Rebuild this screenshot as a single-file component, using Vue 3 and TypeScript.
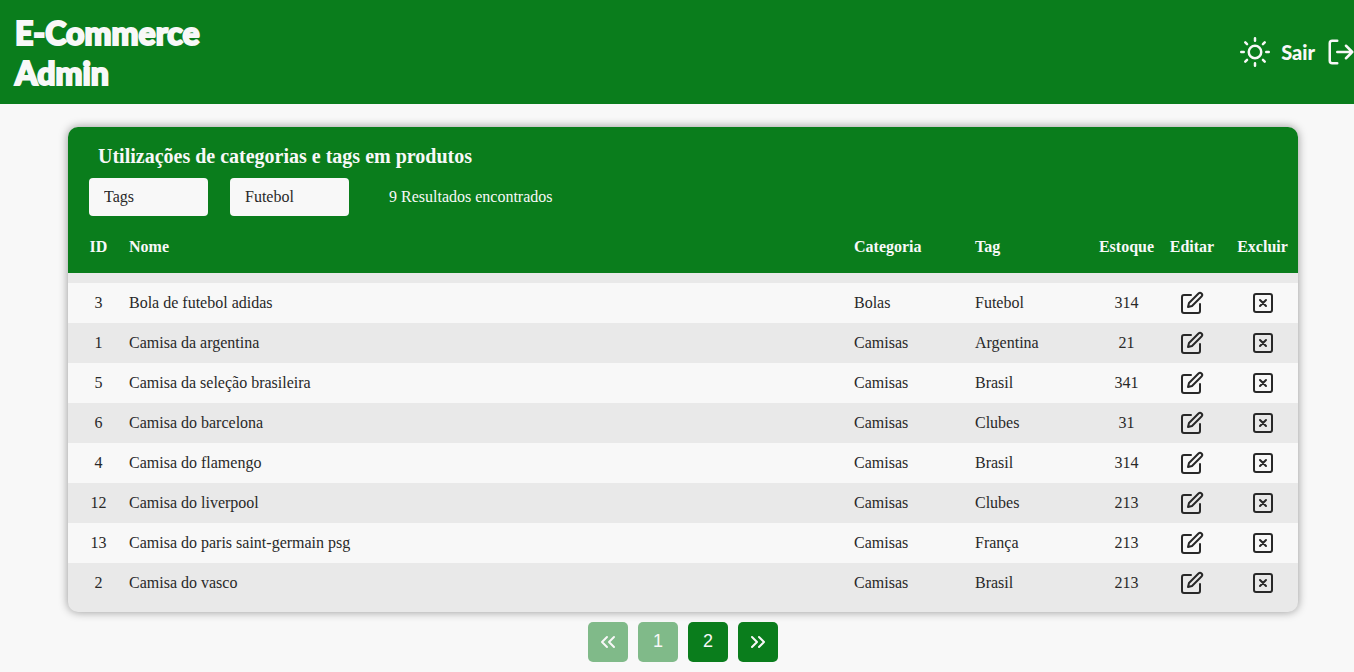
<script setup lang="ts">
import { ref } from 'vue'

interface Product {
  id: number
  name: string
  category: string
  tag: string
  stock: number
}

const products: Product[] = [
  { id: 3, name: 'Bola de futebol adidas', category: 'Bolas', tag: 'Futebol', stock: 314 },
  { id: 1, name: 'Camisa da argentina', category: 'Camisas', tag: 'Argentina', stock: 21 },
  { id: 5, name: 'Camisa da seleção brasileira', category: 'Camisas', tag: 'Brasil', stock: 341 },
  { id: 6, name: 'Camisa do barcelona', category: 'Camisas', tag: 'Clubes', stock: 31 },
  { id: 4, name: 'Camisa do flamengo', category: 'Camisas', tag: 'Brasil', stock: 314 },
  { id: 12, name: 'Camisa do liverpool', category: 'Camisas', tag: 'Clubes', stock: 213 },
  { id: 13, name: 'Camisa do paris saint-germain psg', category: 'Camisas', tag: 'França', stock: 213 },
  { id: 2, name: 'Camisa do vasco', category: 'Camisas', tag: 'Brasil', stock: 213 },
]

const kind = ref('Tags')
const value = ref('Futebol')
const total = 9
</script>

<template>
  <header class="topbar">
    <h1 class="brand">E-Commerce Admin</h1>
    <div class="actions">
      <button type="button" class="plain" aria-label="Alternar tema">
        <svg class="icon-lg" viewBox="0 0 24 24">
          <circle cx="12" cy="12" r="5" />
          <path d="M12 1v2M12 21v2M4.22 4.22l1.42 1.42M18.36 18.36l1.42 1.42M1 12h2M21 12h2M4.22 19.78l1.42-1.42M18.36 5.64l1.42-1.42" />
        </svg>
      </button>
      <button type="button" class="plain logout">
        <span>Sair</span>
        <svg class="icon-lg" viewBox="0 0 24 24">
          <path d="M9 21H5a2 2 0 0 1-2-2V5a2 2 0 0 1 2-2h4M16 17l5-5-5-5M21 12H9" />
        </svg>
      </button>
    </div>
  </header>

  <main class="page">
    <section class="card">
      <div class="card-head">
        <h2 class="title">Utilizações de categorias e tags em produtos</h2>
        <div class="filters">
          <select v-model="kind" class="filter" aria-label="Tipo de filtro">
            <option>Tags</option>
            <option>Categorias</option>
          </select>
          <select v-model="value" class="filter" aria-label="Valor do filtro">
            <option>Futebol</option>
            <option>Brasil</option>
            <option>Clubes</option>
          </select>
          <span class="count">{{ total }} Resultados encontrados</span>
        </div>
      </div>

      <table class="products">
        <colgroup>
          <col class="col-number" />
          <col />
          <col class="col-group" />
          <col class="col-group" />
          <col class="col-number" />
          <col class="col-edit" />
          <col class="col-delete" />
        </colgroup>
        <thead>
          <tr>
            <th class="center">ID</th>
            <th>Nome</th>
            <th>Categoria</th>
            <th>Tag</th>
            <th class="center">Estoque</th>
            <th class="center">Editar</th>
            <th class="center">Excluir</th>
          </tr>
        </thead>
        <tbody>
          <tr v-for="p in products" :key="p.id">
            <td class="center">{{ p.id }}</td>
            <td>{{ p.name }}</td>
            <td>{{ p.category }}</td>
            <td>{{ p.tag }}</td>
            <td class="center">{{ p.stock }}</td>
            <td>
              <button type="button" class="plain row-button" :aria-label="`Editar ${p.name}`">
                <svg class="icon" viewBox="0 0 24 24">
                  <path d="M11 4H4a2 2 0 0 0-2 2v14a2 2 0 0 0 2 2h14a2 2 0 0 0 2-2v-7" />
                  <path d="M18.5 2.5a2.121 2.121 0 0 1 3 3L12 15l-4 1 1-4 9.5-9.5z" />
                </svg>
              </button>
            </td>
            <td>
              <button type="button" class="plain row-button" :aria-label="`Excluir ${p.name}`">
                <svg class="icon" viewBox="0 0 24 24">
                  <rect x="3" y="3" width="18" height="18" rx="2" />
                  <path d="M9 9l6 6M15 9l-6 6" />
                </svg>
              </button>
            </td>
          </tr>
        </tbody>
      </table>
    </section>

    <nav class="pager" aria-label="Paginação">
      <button type="button" disabled aria-label="Página anterior">
        <svg class="icon" viewBox="0 0 24 24"><path d="M11 17l-5-5 5-5M18 17l-5-5 5-5" /></svg>
      </button>
      <button type="button" class="page-number" disabled>1</button>
      <button type="button" class="page-number">2</button>
      <button type="button" aria-label="Próxima página">
        <svg class="icon" viewBox="0 0 24 24"><path d="M13 17l5-5-5-5M6 17l5-5-5-5" /></svg>
      </button>
    </nav>
  </main>
</template>

<style>
body {
  margin: 0;
  background: #f8f8f8;
  color: #282828;
  font: 16px/20px "Liberation Serif", serif;
  overflow-x: hidden;
}
</style>

<style scoped>
.topbar {
  display: flex;
  align-items: center;
  justify-content: space-between;
  padding: 13px 0 11px 15px;
  background: #0a7d1c;
  color: #f8f8f8;
  font-family: Lato, sans-serif;
}

.brand {
  width: min-content;
  min-width: 200px;
  margin: 0;
  font-size: 32px;
  font-weight: 900;
  line-height: 40px;
  -webkit-text-stroke: 2px currentColor;
}

.actions {
  display: flex;
  align-items: center;
  gap: 11px;
  margin: -2px -2px 0 0;
}

.plain {
  display: flex;
  align-items: center;
  padding: 0;
  border: 0;
  background: none;
  color: inherit;
  font: inherit;
  cursor: pointer;
}

.logout {
  gap: 11px;
  font-size: 20px;
  font-weight: 900;
}

svg {
  display: block;
  fill: none;
  stroke: currentColor;
  stroke-width: 2;
  stroke-linecap: round;
  stroke-linejoin: round;
}

.icon-lg {
  width: 30px;
  height: 30px;
}

.icon {
  width: 24px;
  height: 24px;
}

.page {
  padding: 23px 56px 10px 68px;
}

.card {
  overflow: hidden;
  padding-bottom: 9px;
  border-radius: 10px;
  background: #e9e9e9;
  box-shadow: 0 0 10px rgba(0, 0, 0, 0.4);
}

.card-head {
  padding: 17px 21px 5px;
  background: #0a7d1c;
  color: #f8f8f8;
}

.title {
  margin: 0 0 10px;
  padding-left: 9px;
  font-size: 20px;
  line-height: 24px;
}

.filters {
  display: flex;
  align-items: center;
  gap: 22px;
}

.filter {
  appearance: none;
  width: 119px;
  height: 38px;
  padding: 0 15px;
  border: 0;
  border-radius: 4px;
  background: #f8f8f8;
  color: #282828;
  font: inherit;
}

.count {
  padding-left: 18px;
}

.products {
  width: 100%;
  table-layout: fixed;
  border-collapse: collapse;
}

.col-number {
  width: 61px;
}

.col-group {
  width: 121px;
}

.col-edit {
  width: 70px;
}

.col-delete {
  width: 71px;
}

th,
td {
  padding: 0;
  text-align: left;
}

th {
  height: 52px;
  background: #0a7d1c;
  color: #f8f8f8;
}

td {
  height: 40px;
}

tbody::before {
  content: "";
  display: block;
  height: 10px;
}

tbody tr:nth-child(odd) {
  background: #f8f8f8;
}

.center {
  text-align: center;
}

.row-button {
  margin: 0 auto;
}

.pager {
  display: flex;
  justify-content: center;
  gap: 10px;
  margin-top: 10px;
}

.pager button {
  display: flex;
  align-items: center;
  justify-content: center;
  width: 40px;
  height: 40px;
  padding: 0;
  border: 0;
  border-radius: 5px;
  background: #0a7d1c;
  color: #f8f8f8;
  font: 18px/20px "Liberation Sans", sans-serif;
}

.pager .page-number {
  padding-bottom: 2px;
}

.pager button:disabled {
  opacity: 0.5;
}
</style>
